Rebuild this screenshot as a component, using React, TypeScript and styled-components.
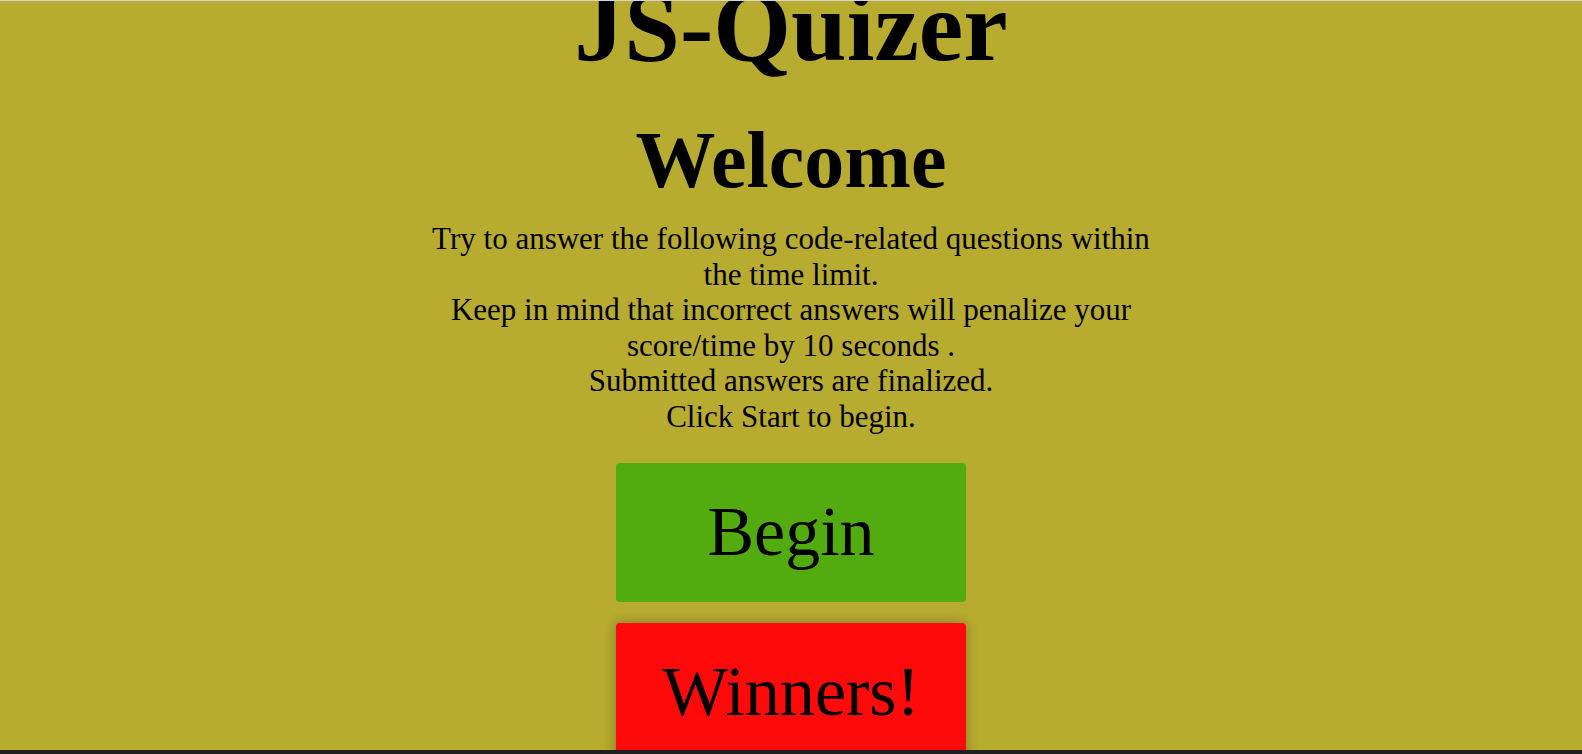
import React from "react";
import styled, { createGlobalStyle } from "styled-components";

const Global = createGlobalStyle`
  html, body {
    margin: 0;
    padding: 0;
    background: #b7ab30;
    overflow: hidden;
  }
  body {
    font-family: "Liberation Serif", "Times New Roman", serif;
    color: #000;
  }
`;

const Page = styled.main`
  border-top: 1px solid #d4d4d4;
  height: 753px;
  overflow: hidden;
  display: flex;
  flex-direction: column;
  align-items: center;
  text-align: center;
`;

const Title = styled.h1`
  margin: -24px 0 0;
  font-size: 100px;
  line-height: 100px;
  font-weight: bold;
`;

const Heading = styled.h2`
  margin: 43px 0 0;
  font-size: 80px;
  line-height: 80px;
  font-weight: bold;
`;

const Intro = styled.p`
  margin: 21px 0 0;
  width: 740px;
  font-size: 31px;
  line-height: 35.6px;
`;

const Actions = styled.div`
  margin-top: 28px;
  display: flex;
  flex-direction: column;
  gap: 21px;
`;

const Button = styled.button<{ $tone: "go" | "alt" }>`
  width: 350px;
  height: 139px;
  border: none;
  border-radius: 4px;
  font-family: "Liberation Serif", "Times New Roman", serif;
  font-size: 70px;
  color: #000;
  padding: 0;
  cursor: pointer;
  background: ${(p) => (p.$tone === "go" ? "#52ac10" : "#ff0a0a")};
  box-shadow: ${(p) => (p.$tone === "alt" ? "0 0 12px rgba(0,0,0,0.3)" : "none")};
`;

const BottomEdge = styled.div`
  position: fixed;
  left: 0;
  right: 0;
  bottom: 0;
  height: 4px;
  background: #1f1f1f;
`;

export default function App() {
  return (
    <>
      <Global />
      <Page>
        <Title>JS-Quizer</Title>
        <Heading>Welcome</Heading>
        <Intro>
          Try to answer the following code-related questions within the time limit.
          <br />
          Keep in mind that incorrect answers will penalize your score/time by 10 seconds .
          <br />
          Submitted answers are finalized.
          <br />
          Click Start to begin.
        </Intro>
        <Actions>
          <Button $tone="go">Begin</Button>
          <Button $tone="alt">Winners!</Button>
        </Actions>
      </Page>
      <BottomEdge />
    </>
  );
}
